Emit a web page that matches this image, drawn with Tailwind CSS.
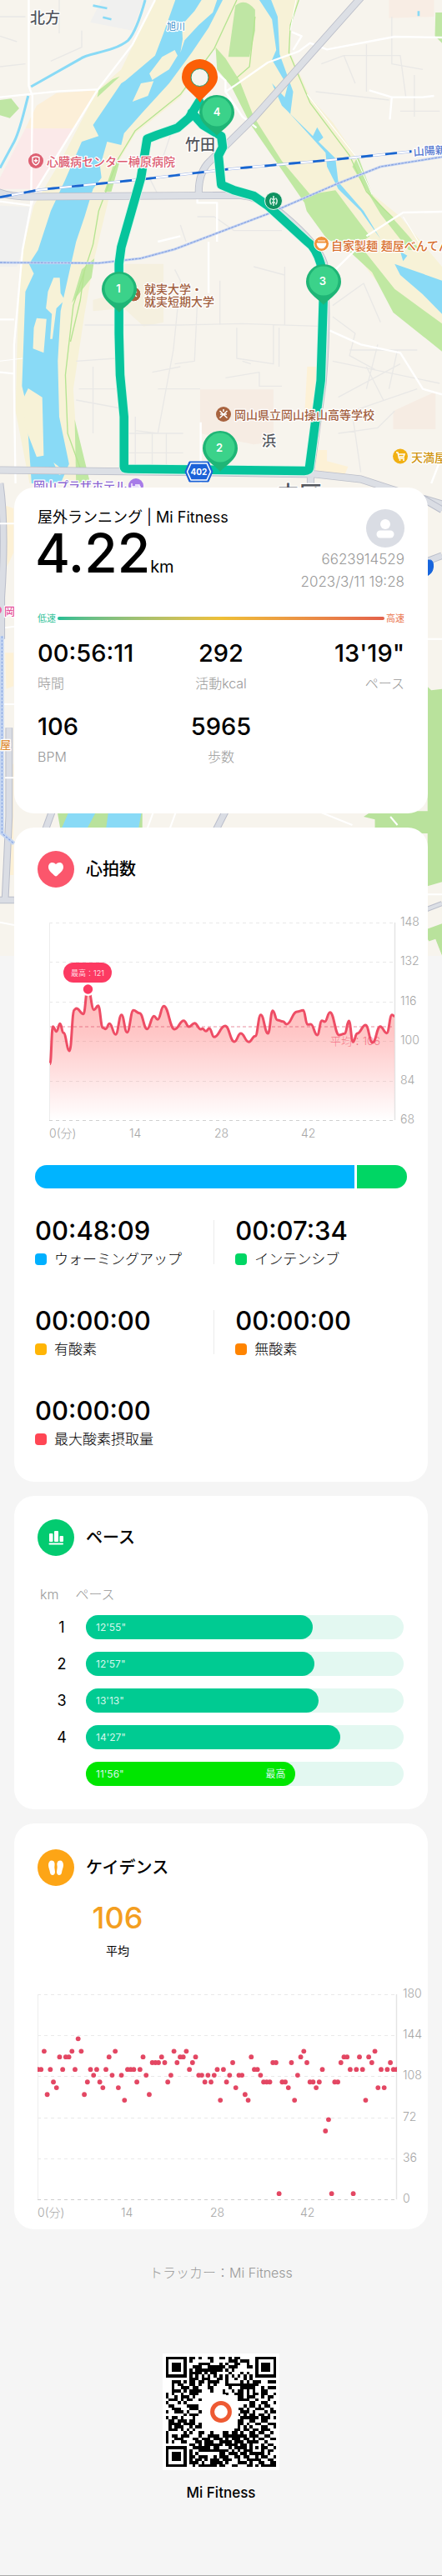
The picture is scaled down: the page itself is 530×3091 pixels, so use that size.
<!DOCTYPE html>
<html lang="ja">
<head>
<meta charset="utf-8">
<meta name="viewport" content="width=device-width, initial-scale=1">
<title>Mi Fitness</title>
<script src="https://cdn.jsdelivr.net/npm/@tailwindcss/browser@4"></script>
</head>
<body class="bg-[#f5f5f5] text-black font-['Inter','Noto_Sans_CJK_JP',sans-serif]">
<div class="relative">

<!-- Map -->
<svg class="absolute inset-x-0 top-0 w-full h-[1147px]" viewBox="0 0 530 1147" preserveAspectRatio="xMidYMin slice" aria-label="ルートマップ">
  <rect width="530" height="1147" fill="#f7f4ed"/>
  <g transform="scale(.338 .33333)" fill="none" stroke-linejoin="round" stroke-linecap="butt">
    <!-- land use -->
    <path fill="#f0f0ef" d="M360 0H510L470 110L320 80ZM0 740L110 745L80 900L60 960H0Z"/>
    <path fill="#fcefd8" d="M200 335L345 325L260 463H90L130 380Z"/>
    <path fill="#fbe9e9" d="M90 463H260L130 680H0V640Z"/>
    <path fill="#bfe6a4" d="M0 360L40 355L68 390L35 425L0 415ZM1545 45H1568V155L1543 130Z"/>
    <path fill="#f8ede4" d="M1380 0H1540V60L1380 65Z"/>
    <path fill="#f6ece3" d="M710 1402H970V1590L900 1600L710 1560ZM1395 1480L1545 1410V1545H1395Z"/>
    <path fill="#f5f0df" d="M440 950H580V1160L510 1175L440 1110L330 1120V1080L400 1060Z"/>
    <path fill="#fdf1d6" d="M1090 1320H1130L1110 1500H1080ZM1120 1620H1160V1660L1235 1680L1220 1715L1120 1700ZM20 1820L48 1830V1990L25 2040ZM18 2350H48V2470L22 2480ZM22 2750H48V3150H25Z"/>
    <!-- river banks -->
    <path fill="#f7f2d7" d="M550 0H1060L1030 100V190L1100 350L1180 440L1262 560L1322 700L1420 780L1568 960V1260L1440 1150L1250 900L1090 740L1000 600L900 430L840 300L760 175L640 350L480 480L410 600L380 740L335 930L300 1130L260 1400L270 1560L320 1740H105L55 1480L62 1200L75 920L120 740L215 580L345 325L430 250Z"/>
    <!-- parks -->
    <path fill="#bfe6a4" d="M835 20Q870 -10 905 35V110L885 205H810Z"/>
    <path fill="#c0e8a2" d="M765 170L800 210L850 290L900 420L1000 580L1100 700L1190 685L1312 850L1240 900L1160 860L1088 760L1080 730L890 450L820 310L770 250Z"/>
    <path fill="#c0e8a2" d="M1270 560L1322 705L1450 850L1490 900H1450L1350 770L1250 600Z"/>
    <path fill="#c0e8a2" d="M1240 905L1290 900L1400 1040L1568 1165V1265L1395 1125L1320 980ZM425 275L345 350L350 325L400 285ZM400 600L425 580L395 690H370ZM290 970L335 930L325 1000L255 1090ZM265 1510L320 1740H270Z"/>
    <!-- river -->
    <path fill="#89daf6" d="M622 0H790L740 100L680 190L600 300L510 400L440 480L430 522L380 510L355 600L360 640L330 680L300 780L270 870L250 960L215 1120L205 1300L210 1500L245 1670L215 1740H112L92 1450L78 1390L90 1050L120 985L103 950L135 900L180 760L230 650L290 510L350 490L330 450L430 300L445 290L550 200L580 120Z"/>
    <path fill="#f7f2d7" d="M715 0H770L755 45L705 90L655 145L640 190L648 140L645 90L690 40ZM620 180L575 205L530 265L540 288L600 250L630 200ZM545 292L500 300L470 366L525 345ZM190 1000L212 1000L215 1055L230 1080L200 1110L186 1220L178 1220L184 1130L163 1110L170 1050ZM130 1145L165 1148L155 1270L117 1255L120 1180ZM100 1398L150 1430L155 1640L130 1645L90 1540L80 1440ZM190 1665L235 1700L210 1710Z"/>
    <path fill="#89daf6" d="M920 0H962L985 60L992 195L1040 330L1030 410L1110 490L1125 458L1147 495L1130 510L1190 570L1200 655L1290 760L1350 860L1280 760L1200 680L1160 600L1155 550L1020 400L1000 380L965 300L1010 350L1020 310L965 215L980 180L965 70ZM1400 950L1568 1010V1130L1500 1060L1420 990ZM1420 905L1445 920L1430 940Z"/>
    <g stroke="#89daf6">
      <path stroke-width="9" d="M515 0Q485 110 455 145C400 190 310 190 285 212L110 312M100 345C85 400 70 480 45 520L0 605"/>
      <path stroke-width="8" d="M330 20L380 30M365 62L395 70M1485 40V58"/>
    </g>
    <path stroke="#b5e491" stroke-width="4" d="M840 0L760 175L640 340L480 470L420 570L350 760L330 880L260 1100L232 1350L240 1560L290 1700M905 60L885 240L840 280M1060 0L1030 90L1025 190L1100 370L1240 560L1300 690L1400 790M300 970L285 1080L250 1230"/>
    <!-- minor roads -->
    <path stroke="#e9e8e6" stroke-width="4" d="M0 60H90M0 130L60 150M180 220L290 170V110M210 0V120M0 240L90 230M620 440L580 560M1140 230L1220 200L1260 300M1220 200H1420L1440 350M1300 160V330M1390 60V230L1500 250M1120 330L1380 360M1420 400H1560M1470 270V420M700 780H760L830 830H1000M640 810L660 870M530 640L560 700M300 1170H410M440 1170L640 1170L860 1165L1150 1175M620 970L640 1010L615 1260L560 1560L480 1550M780 1010V1170M840 1180V1290L970 1310V1170M700 1090L690 1300L620 1310M540 1340L640 1320M860 1300L890 1310M1010 960V1170M900 960L1010 990M990 1180V1320M800 1360L920 1340V1390H1000M710 1400H560M270 1300L410 1290M280 1400H410M330 1320V1560M270 1440L430 1470M480 1500V1690M540 1560V1690M590 1560V1690M450 1560H650M450 1630H650M1180 1100L1290 1020L1350 1160M1180 1140L1260 1200L1240 1280L1330 1330M1180 1300L1560 1380M1240 1260L1480 1260M1200 1430L1420 1310M1250 1480L1480 1400M1300 1320L1360 1440M1200 1560L1340 1540L1400 1480M1250 1490L1280 1700M1340 1240L1300 1400M1410 1260L1380 1400"/>
    <path stroke="#fff" stroke-width="7" d="M102 0V310L115 345L110 740M0 350L210 328L345 322M550 0L470 160L345 325L130 680L110 740L80 900L50 1240V1400L55 1740M110 740L0 725M700 700V730H770V870M1568 135L1400 132L1160 178L1100 155L1060 185L950 225L830 310L800 330L860 420L910 460M1035 115L1070 130L1040 180M800 330V290L765 260M1310 325L1390 350H1500L1540 345M1390 350L1383 430M740 870V1055M1170 1190L1280 1240L1420 1270L1500 1400L1568 1420M1260 900L1190 970M1568 762L1430 765L1300 850M712 1520V1740M0 1340L50 1345M0 1150H50M1530 1740L1568 1640M560 870L640 850"/>
    <path stroke="#fff" stroke-width="3" d="M1050 0L1030 110M1090 340L1260 560L1320 700M1430 780L1490 880M0 1300L80 1290"/>
    <!-- expressway -->
    <g stroke="#bbbec9" stroke-width="27">
      <path d="M1290 -20L900 425L745 580Q703 620 705 700M-10 690Q30 708 110 708L850 703Q930 710 1000 770Q1130 880 1150 950Q1165 1150 1145 1380L1102 1700V1740M0 1692L700 1700L1120 1707L1280 1725L1400 1765L1568 1815"/>
    </g>
    <g stroke="#dcdfe5" stroke-width="22">
      <path d="M1290 -20L900 425L745 580Q703 620 705 700M-10 690Q30 708 110 708L850 703Q930 710 1000 770Q1130 880 1150 950Q1165 1150 1145 1380L1102 1700V1740M0 1692L700 1700L1120 1707L1280 1725L1400 1765L1568 1815"/>
    </g>
    <!-- railways -->
    <path stroke="#9db5eb" stroke-width="9" d="M0 710L140 683L500 646L800 610L1180 575L1460 545"/>
    <path stroke="#fff" stroke-width="6" d="M0 710L140 683L500 646L800 610L1180 575L1460 545"/>
    <path stroke="#1765cf" stroke-width="8" stroke-dasharray="42 44" d="M0 710L140 683L500 646L800 610L1180 575L1460 545"/>
    <path stroke="#c6d5f3" stroke-width="9" d="M0 945L350 947L500 930L620 897L950 770L1200 660L1350 600L1568 565"/>
    <path stroke="#8ca6e2" stroke-width="4" stroke-dasharray="9 3" d="M0 945L350 947L500 930L620 897L950 770L1200 660L1350 600L1568 565"/>
    <!-- map around the lower cards -->
    <path stroke="#b9bdca" stroke-width="26" d="M0 1740Q22 1900 5 2150V2300M32 2620V2940L18 3240M0 3240H50M185 2920L160 2990M800 2920L765 2990M1500 1795L1568 1835M1517 2020L1568 2000M1517 3275L1568 3255"/>
    <path stroke="#dadde4" stroke-width="20" d="M0 1740Q22 1900 5 2150V2300M32 2620V2940L18 3240M0 3240H50M185 2920L160 2990M800 2920L765 2990M1500 1795L1568 1835M1517 2020L1568 2000"/>
    <path stroke="#c5d6f2" stroke-width="14" d="M7 2290V3000L50 3037"/>
    <path stroke="#7f9edf" stroke-width="3" stroke-dasharray="8 5" d="M7 2290V3000L50 3037"/>
    <path stroke="#fff" stroke-width="6" d="M0 1885H50M18 2260L50 2255M15 2535H50M18 2800H50M0 3320L50 3330M1517 2300H1568M520 2990L545 2920M600 2990L625 2920"/>
    <path fill="#b9e29c" d="M203 2920H505V2990H215ZM1517 2472L1530 2485L1568 2480V3440L1550 3400L1540 3420L1517 3380ZM1290 2940L1320 2920H1520V3000H1330V2950Z"/>
    <path fill="#89daf6" d="M245 2920H342L305 2990H215ZM385 2920H503L490 2990H375Z"/>
    <path fill="#f7f4ed" d="M1517 3190L1568 3175V3325L1500 3350ZM1517 3390L1545 3380L1568 3440L1550 3447H1517Z"/>
    <path stroke="#b9bdca" stroke-width="18" d="M1510 3275L1568 3252"/>
    <path stroke="#dcdfe5" stroke-width="12" d="M1510 3275L1568 3252"/>
    <path stroke="#fff" stroke-width="6" d="M1140 2925L1250 2970M1385 2940L1410 2970M1510 3220H1568"/>
    <!-- running route -->
    <path stroke="#d5f6e8" stroke-width="36" stroke-linecap="round" d="M707 365L670 425L630 460L560 485L522 500L500 640L430 890L422 950V1200L426 1350L440 1500V1680Q440 1688 455 1688L1080 1695Q1098 1695 1098 1680L1138 1370L1148 1050L1138 950Q1120 890 1090 870L950 740L900 705L830 685L785 665L775 560L790 530L785 490L720 450L680 405"/>
    <path stroke="#06c49c" stroke-width="31" stroke-linecap="round" d="M707 365L670 425L630 460L560 485L522 500L500 640L430 890L422 950V1200L426 1350L440 1500V1680Q440 1688 455 1688L1080 1695Q1098 1695 1098 1680L1138 1370L1148 1050L1138 950Q1120 890 1090 870L950 740L900 705L830 685L785 665L775 560L790 530L785 490L720 450L680 405"/>
  </g>

  <!-- place icons -->
  <g>
    <circle cx="43" cy="193" r="9" fill="#dd6072"/><path d="M39 189Q43 187 47 189V194Q46 197 43 198Q40 197 39 194Z" fill="none" stroke="#fff" stroke-width="1.4"/><path d="M43 190.500V195M40.700 192.700H45.300" stroke="#fff" stroke-width="1.400"/>
    <circle cx="328" cy="241" r="10.500" fill="#0f9160" stroke="#e6f4ec"/><path d="M328 235V247M325.500 237.500Q322 241 325.500 245.500M330.500 237.500Q334 241 330.500 245.500M326 239H330M326 243H330" stroke="#d9f2e5" stroke-width="1.500" fill="none"/>
    <circle cx="385.500" cy="292.500" r="9" fill="#f0913a" stroke="#fff"/><path d="M380 292H391Q390 298 385.500 298Q381 298 380 292ZM381 289H390" fill="#fff" stroke="#fff"/>
    <circle cx="160" cy="353" r="9" fill="#a8633f" stroke="#fff"/><path d="M157 350L164 356M164 350L157 356" stroke="#fff" stroke-width="1.500"/>
    <circle cx="268" cy="497" r="9" fill="#a8633f"/><path d="M263.500 493L272.500 501.500M272.500 493L263.500 501.500M268 491V494M264 497H272" stroke="#fff" stroke-width="1.500"/>
    <circle cx="480" cy="547.500" r="9" fill="#f1b012"/><path d="M475 543H477L478.500 550H485M478 545H485L484 548H479" stroke="#fff" stroke-width="1.500" fill="none"/><circle cx="479.500" cy="552" r="1" fill="#fff"/><circle cx="484" cy="552" r="1" fill="#fff"/>
    <circle cx="163" cy="583" r="9" fill="#a77be8"/><path d="M158 580V586M158 584H168V586M162 582H167V584" stroke="#fff" stroke-width="1.300" fill="none"/>
    <circle cx="-3" cy="732" r="5" fill="#ef5fa5"/>
    <path d="M514 672Q520 671 519.500 680Q519 688 512 691V672Z" fill="#1765dd" stroke="#1765dd" stroke-width="1"/>
  </g>
  <!-- place names -->
  <g paint-order="stroke" stroke="#fff" stroke-width="2.500" stroke-linejoin="round" font-weight="500">
    <g font-size="18" fill="#53565c"><text x="36" y="28">北方</text><text x="222" y="180">竹田</text><text x="314" y="535" font-size="17">浜</text><text x="332" y="603" font-size="27">中区</text></g>
    <text x="200" y="36" font-size="11" fill="#5b9fd3">旭川</text>
    <text x="56" y="199" font-size="14" fill="#dc5b70">心臓病センター榊原病院</text>
    <text x="496" y="187" font-size="13" fill="#5578d0" transform="rotate(-4 496 187)">山陽新</text>
    <text x="397" y="300" font-size="14" fill="#d8702f">自家製麺 麺屋べんてん</text>
    <g font-size="14" fill="#a25f40"><text x="173" y="352">就実大学・</text><text x="173" y="367">就実短期大学</text><text x="281" y="503">岡山県立岡山操山高等学校</text></g>
    <text x="493" y="554" font-size="14" fill="#cf9410">天満屋</text>
    <text x="40" y="588" font-size="14" fill="#8c68d2">岡山プラザホテル</text>
    <text x="5" y="738" font-size="13" fill="#e5539c">岡</text>
    <text x="0" y="898" font-size="13" fill="#dd8b35">屋</text>
  </g>
  <!-- route shield -->
  <path d="M227 554H250L255 566L250 578H227L222 566Z" fill="#1b62d8" stroke="#1b62d8" stroke-width="1"/>
  <path d="M229 556H248L252.500 566L248 576H229L224.500 566Z" fill="#1b62d8" stroke="#fff" stroke-width="1.500"/>
  <text x="238.500" y="570" font-size="10" font-weight="700" fill="#fff" text-anchor="middle">402</text>
  <!-- kilometre pins -->
  <defs>
    <g id="pin"><path d="M0 28C-4 22 -21 14 -21 0A21 21 0 0 1 21 0C21 14 4 22 0 28Z" fill="#1fb576"/><circle r="17.500" cy="-1" fill="#3bd28a"/></g>
  </defs>
  <use href="#pin" x="143" y="347"/><use href="#pin" x="264" y="538"/><use href="#pin" x="388" y="338"/><use href="#pin" x="260" y="135"/>
  <g font-size="13" font-weight="600" fill="#fff" text-anchor="middle"><text x="142" y="351">1</text><text x="263" y="542">2</text><text x="387" y="342">3</text><text x="260" y="139">4</text></g>
  <path d="M240 123C234 113 218 106 218 92.500A21.500 21.500 0 0 1 261 92.500C261 106 245 113 240 123Z" fill="#fc5f07"/>
  <circle cx="239.500" cy="93" r="10.500" fill="#f7f4ed" stroke="#2b9a6c" stroke-width="1"/>
</svg>

<main class="relative flex flex-col gap-[17px] px-[17px] pt-[585px]">

  <!-- Summary -->
  <section class="rounded-3xl bg-white px-7 pt-[22px] pb-14">
    <header class="flex justify-between">
      <div>
        <h1 class="text-[18px] leading-[27px]">屋外ランニング | Mi Fitness</h1>
        <p class="flex items-baseline text-[64px] font-medium leading-[60px] -ml-[3px]">4.22<span class="text-[20px] font-normal">km</span></p>
      </div>
      <div class="flex flex-col items-end pt-1 text-[17px] font-light leading-[27px] text-[#999]">
        <svg class="mb-px size-[46px]" viewBox="0 0 46 46" aria-hidden="true"><circle cx="23" cy="23" r="23" fill="#dadde4"/><circle cx="23" cy="18" r="6" fill="#fff"/><rect x="12.500" y="25.500" width="21" height="9" rx="4.500" fill="#fff"/></svg>
        <p>6623914529</p>
        <p>2023/3/11 19:28</p>
      </div>
    </header>
    <div class="mt-[22px] flex items-center gap-0.5 text-[11px] leading-4">
      <span class="text-[#35c39b]">低速</span>
      <span class="h-1 flex-1 rounded-full bg-linear-to-r from-[#1fbd93] via-[#eebf35] to-[#e3604a]"></span>
      <span class="text-[#ea7650]">高速</span>
    </div>
    <dl class="mt-4 grid grid-cols-3 gap-y-[22px]">
      <div class="flex flex-col gap-1.5"><dd class="text-[29px] font-medium leading-9">00:56:11</dd><dt class="order-last text-[16px] font-light leading-6 text-[#999]">時間</dt></div>
      <div class="flex flex-col gap-1.5 text-center"><dd class="text-[29px] font-medium leading-9">292</dd><dt class="order-last text-[16px] font-light leading-6 text-[#999]">活動kcal</dt></div>
      <div class="flex flex-col gap-1.5 text-right"><dd class="text-[29px] font-medium leading-9">13'19"</dd><dt class="order-last text-[16px] font-light leading-6 text-[#999]">ペース</dt></div>
      <div class="flex flex-col gap-1.5"><dd class="text-[29px] font-medium leading-9">106</dd><dt class="order-last text-[16px] font-light leading-6 text-[#999]">BPM</dt></div>
      <div class="flex flex-col gap-1.5 text-center"><dd class="text-[29px] font-medium leading-9">5965</dd><dt class="order-last text-[16px] font-light leading-6 text-[#999]">歩数</dt></div>
    </dl>
  </section>

  <!-- Heart rate -->
  <section class="rounded-3xl bg-white pt-7 pb-[39px]">
    <header class="flex items-center gap-3.5 px-7">
      <svg class="size-11" viewBox="0 0 44 44" aria-hidden="true"><circle cx="22" cy="22" r="22" fill="#fb566c"/><path d="M22 16C19 12.500 13 13.500 13 19.500C13 24 18.500 27.500 20.500 29.800Q22 31.200 23.500 29.800C25.500 27.500 31 24 31 19.500C31 13.500 25 12.500 22 16Z" fill="#fff"/></svg>
      <h2 class="text-[20px] font-medium leading-7">心拍数</h2>
    </header>
    <svg id="heart" class="block w-full" viewBox="0 0 496 309" aria-label="心拍数グラフ">
      <defs><linearGradient id="fade" x1="0" y1="0" x2="0" y2="1"><stop offset="0" stop-color="#ff5a5a" stop-opacity=".42"/><stop offset=".35" stop-color="#ff5a5a" stop-opacity=".34"/><stop offset="1" stop-color="#ff5a5a" stop-opacity="0"/></linearGradient></defs>
      <g class="grid-lines" stroke="#e9e9e9" stroke-dasharray="4 4"></g>
      <path d="M42.500 42V279" stroke="#ededed"/><path d="M456.500 42V279" stroke="#e4e4e4" stroke-width="1.500"/>
      <path class="area" fill="url(#fade)"/>
      <path d="M43 167H456" stroke="#d84562" stroke-opacity=".6" stroke-dasharray="4 3"/>
      <path class="line" fill="none" stroke="#ee4d65" stroke-width="3" stroke-linejoin="round"/>
      <circle cx="88.500" cy="122" r="8" fill="#fff"/><circle cx="88.500" cy="122" r="5.700" fill="#fc3a62"/>
      <rect x="59" y="90" width="58" height="24" rx="12" fill="#fc3a62"/>
      <text x="88" y="106" font-size="9" fill="#ffd9e0" text-anchor="middle">最高：121</text>
      <text x="379" y="189" font-size="13" font-weight="300" fill="#f03c5a" fill-opacity=".6">平均：106</text>
      <g class="y-labels" font-size="14" font-weight="300" fill="#a6a6a6"></g>
      <g font-size="14" font-weight="300" fill="#a6a6a6"><text x="42" y="300">0(分)</text><text x="138" y="300">14</text><text x="240" y="300">28</text><text x="344" y="300">42</text></g>
    </svg>
    <div class="mx-[25px] mt-6 flex h-7 gap-[3px] overflow-hidden rounded-full">
      <div class="bg-[#00b4ff]" style="flex:382"></div>
      <div class="bg-[#00d664]" style="flex:60"></div>
    </div>
    <dl class="mx-[25px] mt-[31px] grid grid-cols-[7fr_6fr] gap-y-[42px]">
      <div class="flex items-center justify-between">
        <div class="flex flex-col gap-0.5"><dd class="text-[31px] font-medium leading-10">00:48:09</dd><dt class="order-last flex items-center gap-[9px] text-[17px] font-light leading-6"><i class="size-3.5 rounded bg-[#00b0ff]"></i>ウォーミングアップ</dt></div>
        <span class="mr-[25px] h-[53px] w-px bg-[#ececec]"></span>
      </div>
      <div class="flex flex-col gap-0.5"><dd class="text-[31px] font-medium leading-10">00:07:34</dd><dt class="order-last flex items-center gap-[9px] text-[17px] font-light leading-6"><i class="size-3.5 rounded bg-[#00d664]"></i>インテンシブ</dt></div>
      <div class="flex items-center justify-between">
        <div class="flex flex-col gap-0.5"><dd class="text-[31px] font-medium leading-10">00:00:00</dd><dt class="order-last flex items-center gap-[9px] text-[17px] font-light leading-6"><i class="size-3.5 rounded bg-[#ffb506]"></i>有酸素</dt></div>
        <span class="mr-[25px] h-[53px] w-px bg-[#ececec]"></span>
      </div>
      <div class="flex flex-col gap-0.5"><dd class="text-[31px] font-medium leading-10">00:00:00</dd><dt class="order-last flex items-center gap-[9px] text-[17px] font-light leading-6"><i class="size-3.5 rounded bg-[#ff8400]"></i>無酸素</dt></div>
      <div class="flex flex-col gap-0.5"><dd class="text-[31px] font-medium leading-10">00:00:00</dd><dt class="order-last flex items-center gap-[9px] text-[17px] font-light leading-6"><i class="size-3.5 rounded bg-[#ff4654]"></i>最大酸素摂取量</dt></div>
    </dl>
  </section>

  <!-- Pace -->
  <section class="rounded-3xl bg-white px-7 pt-7 pb-7">
    <header class="flex items-center gap-3.5">
      <svg class="size-11" viewBox="0 0 44 44" aria-hidden="true"><circle cx="22" cy="22" r="22" fill="#03cb70"/><g fill="#fff"><rect x="14" y="17" width="4.500" height="10" rx="1"/><rect x="20" y="14" width="5" height="13" rx="1"/><rect x="26.500" y="20" width="4.500" height="7" rx="1"/><rect x="13.500" y="28.500" width="17.500" height="2" rx="1"/></g></svg>
      <h2 class="text-[20px] font-medium leading-7">ペース</h2>
    </header>
    <table class="mt-[33px] block">
      <thead class="block text-[16px] font-light leading-[26px] text-[#999]"><tr class="flex gap-5"><th class="ml-[3px] font-light">km</th><th class="font-light">ペース</th></tr></thead>
      <tbody class="mt-3 flex flex-col gap-[15px]">
        <tr class="flex items-center"><th class="w-[58px] text-center text-[18px] font-normal leading-[29px]">1</th><td class="mr-px flex-1 rounded-full bg-[#e3f8f1]"><div class="flex justify-between rounded-full bg-[#00cb92] px-3 text-[12px] leading-[29px] text-[#d5f7ec]" style="width:71.5%">12'55"</div></td></tr>
        <tr class="flex items-center"><th class="w-[58px] text-center text-[18px] font-normal leading-[29px]">2</th><td class="mr-px flex-1 rounded-full bg-[#e3f8f1]"><div class="flex justify-between rounded-full bg-[#00cb92] px-3 text-[12px] leading-[29px] text-[#d5f7ec]" style="width:71.8%">12'57"</div></td></tr>
        <tr class="flex items-center"><th class="w-[58px] text-center text-[18px] font-normal leading-[29px]">3</th><td class="mr-px flex-1 rounded-full bg-[#e3f8f1]"><div class="flex justify-between rounded-full bg-[#00cb92] px-3 text-[12px] leading-[29px] text-[#d5f7ec]" style="width:73.2%">13'13"</div></td></tr>
        <tr class="flex items-center"><th class="w-[58px] text-center text-[18px] font-normal leading-[29px]">4</th><td class="mr-px flex-1 rounded-full bg-[#e3f8f1]"><div class="flex justify-between rounded-full bg-[#00cb92] px-3 text-[12px] leading-[29px] text-[#d5f7ec]" style="width:80%">14'27"</div></td></tr>
        <tr class="flex items-center"><th class="w-[58px]"></th><td class="mr-px flex-1 rounded-full bg-[#e3f8f1]"><div class="flex justify-between rounded-full bg-[#00e600] px-3 text-[12px] leading-[29px] text-[#d5f7ec]" style="width:66%">11'56"<span>最高</span></div></td></tr>
      </tbody>
    </table>
  </section>

  <!-- Cadence -->
  <section class="rounded-3xl bg-white pt-[31px]">
    <header class="flex items-center gap-3.5 px-7">
      <svg class="size-11" viewBox="0 0 44 44" aria-hidden="true"><circle cx="22" cy="22" r="22" fill="#fda516"/><path d="M17 13.500C20 13.500 21 16.500 20.500 19.500C20 22 20.800 24 21 27C21.200 32 15.500 32 15 28C14.700 25 13 22 13 19C13 15.500 14.500 13.500 17 13.500ZM27 13.500C24 13.500 23 16.500 23.500 19.500C24 22 23.200 24 23 27C22.800 32 28.500 32 29 28C29.300 25 31 22 31 19C31 15.500 29.500 13.500 27 13.500Z" fill="#fff"/></svg>
      <h2 class="text-[20px] font-medium leading-7">ケイデンス</h2>
    </header>
    <div class="mt-4 ml-[94px] flex w-[60px] flex-col items-center gap-2">
      <span class="text-[36px] font-medium leading-[44px] text-[#f39e20]">106</span>
      <span class="text-[14px] leading-5">平均</span>
    </div>
    <svg id="cadence" class="block w-full" viewBox="0 0 496 324" aria-label="ケイデンスグラフ">
      <g class="grid-lines" stroke="#e9e9e9" stroke-dasharray="4 4"></g>
      <path d="M28.500 42V288" stroke="#ededed"/><path d="M458.500 42V288" stroke="#e4e4e4" stroke-width="1.500"/>
      <clipPath id="plot"><rect x="28" y="40" width="431" height="250"/></clipPath>
      <g class="dots" fill="#e34763" clip-path="url(#plot)"></g>
      <g class="y-labels" font-size="14" font-weight="300" fill="#a6a6a6"></g>
      <g font-size="14" font-weight="300" fill="#a6a6a6"><text x="28" y="309">0(分)</text><text x="128" y="309">14</text><text x="235" y="309">28</text><text x="343" y="309">42</text></g>
    </svg>
  </section>
</main>

<footer class="flex flex-col items-center border-b border-[#a9a9a9] pt-10 pb-[87px]">
  <p class="text-[16px] font-light leading-6 text-[#999]">トラッカー：Mi Fitness</p>
  <svg id="qr" class="mt-[85px] size-[140px] bg-white" viewBox="-1 -1 39 39" shape-rendering="crispEdges" aria-label="QRコード"></svg>
  <p class="mt-[15px] text-[17px] font-medium leading-6">Mi Fitness</p>
</footer>
</div>

<script>
const NS = 'http://www.w3.org/2000/svg';
function add(parent, tag, attrs, text) {
  const el = document.createElementNS(NS, tag);
  for (const k in attrs) el.setAttribute(k, attrs[k]);
  if (text !== undefined) el.textContent = text;
  parent.appendChild(el);
  return el;
}
function axis(svg, labels, x0, x1, top, bottom, lx) {
  labels.forEach((v, i) => {
    const y = Math.round(top + (bottom - top) * i / (labels.length - 1)) + .5;
    const a = { d: `M${x0} ${y}H${x1}` };
    if (i === labels.length - 1) a.stroke = '#cfcfcf';
    add(svg.querySelector('.grid-lines'), 'path', a);
    add(svg.querySelector('.y-labels'), 'text', { x: lx, y: y + 3.5 }, v);
  });
}
// Heart rate: turning points of the curve, in thirds of a unit
const heart = document.getElementById('heart');
axis(heart, [148, 132, 116, 100, 84, 68], 42, 456, 41.5, 279, 463);
const pts = [[60,590],[70,455],[83,473],[96,445],[108,478],[130,543],[147,395],[155,390],[180,410],[196,315],[218,395],[233,380],[250,460],[260,464],[274,445],[296,484],[317,413],[337,476],[360,397],[382,407],[409,464],[434,418],[447,430],[469,382],[508,465],[541,434],[560,456],[580,443],[602,465],[608,463],[621,472],[633,462],[650,493],[690,453],[723,510],[746,480],[775,511],[798,490],[818,413],[844,480],[861,398],[878,432],[898,437],[911,447],[948,402],[971,397],[986,448],[998,447],[1021,486],[1038,434],[1048,438],[1067,404],[1100,486],[1120,481],[1135,435],[1150,511],[1165,480],[1195,450],[1220,513],[1248,455],[1271,479],[1290,413],[1299,418]].map(([x, y]) => [23 + x / 3, 15 + y / 3]);
let d = `M${pts[0]}`;
for (let i = 1; i < pts.length; i++) {
  const [a, b] = pts[i - 1], [x, y] = pts[i], h = (x - a) * .45;
  d += `C${a + h} ${b} ${x - h} ${y} ${x} ${y}`;
}
heart.querySelector('.line').setAttribute('d', d);
heart.querySelector('.area').setAttribute('d', d + 'V279H43Z');

// Cadence: one sample per dot, steps per minute
const cad = document.getElementById('cadence');
axis(cad, [180, 144, 108, 72, 36, 0], 28, 458, 42, 288, 466);
const spm = [114,114,130,92,114,103,98,125,114,125,125,130,114,141,130,92,103,114,109,114,103,98,114,125,109,130,98,109,87,114,114,114,103,114,125,109,92,120,120,120,125,120,103,109,130,120,125,125,130,114,120,125,109,109,103,109,103,109,114,87,114,103,109,120,98,109,109,92,87,125,114,114,109,103,103,103,120,120,5,103,103,98,120,87,109,125,130,120,103,103,98,103,114,60,70,5,103,103,120,125,125,114,5,114,125,114,87,125,120,130,98,114,98,114,120,114,114];
spm.forEach((v, i) => add(cad.querySelector('.dots'), 'circle', { cx: 28.5 + i * 430 / 116, cy: 288 - v * 246 / 180, r: 2.9 }));

// QR code
const rows = [
'1111111011010011001101011000001111111',
'1000001010000001000001110111001000001',
'1011101000011110001010011001001011101',
'1011101001110011111101110001101011101',
'1011101010111111111010100000001011101',
'1000001011110101100001000101001000001',
'1111111010101010101010101010101111111',
'0000000011101110011010010010100000000',
'0011101011011011110010000101011100111',
'0010110011010010100011111111111000000',
'0010011101100011000001000111110010111',
'0011101011110001000100101101010011000',
'1010010011100000000110011101011011001',
'1001011101000000000000001101110010110',
'0111010110010000000000001111001000100',
'1000101000000000000000000000110011001',
'0110000111100000000000000010110101100',
'0011100011100000000000001101001110010',
'1001110100010100000000000111010001011',
'0000001011100000000000001010110110100',
'1011010001000000000000000111111011101',
'0110111011000000000000001100110011000',
'0111101111010000000000001101001100111',
'0101110010110000000000001010100011001',
'0111010101000000000000011011011011100',
'1000001010011001000110110100110110010',
'1011011100010011110111111110111001100',
'1001110001101110111010111011010110011',
'1010011000110111001111011101111001000',
'0000000011010111111011110110100010110',
'1111111001111110110001011110101011001',
'1000001010011111111110101011100010110',
'1011101010100000001101110110111110100',
'1011101011011100101110011011001011001',
'1011101010110101110111001001111100110',
'1000001011101001111010001110100110011',
'1111111001011111101100110001101011111'];
const qr = document.getElementById('qr');
let q = '';
rows.forEach((r, y) => [...r].forEach((c, x) => { if (c === '1') q += `M${x} ${y}h1v1h-1z`; }));
add(qr, 'path', { d: q });
add(qr, 'circle', { cx: 18.5, cy: 18.5, r: 6, fill: '#fff' });
add(qr, 'circle', { cx: 18.5, cy: 18.5, r: 2.9, fill: 'none', stroke: '#ee5a33', 'stroke-width': 1.4, 'shape-rendering': 'auto' });
</script>
</body>
</html>
